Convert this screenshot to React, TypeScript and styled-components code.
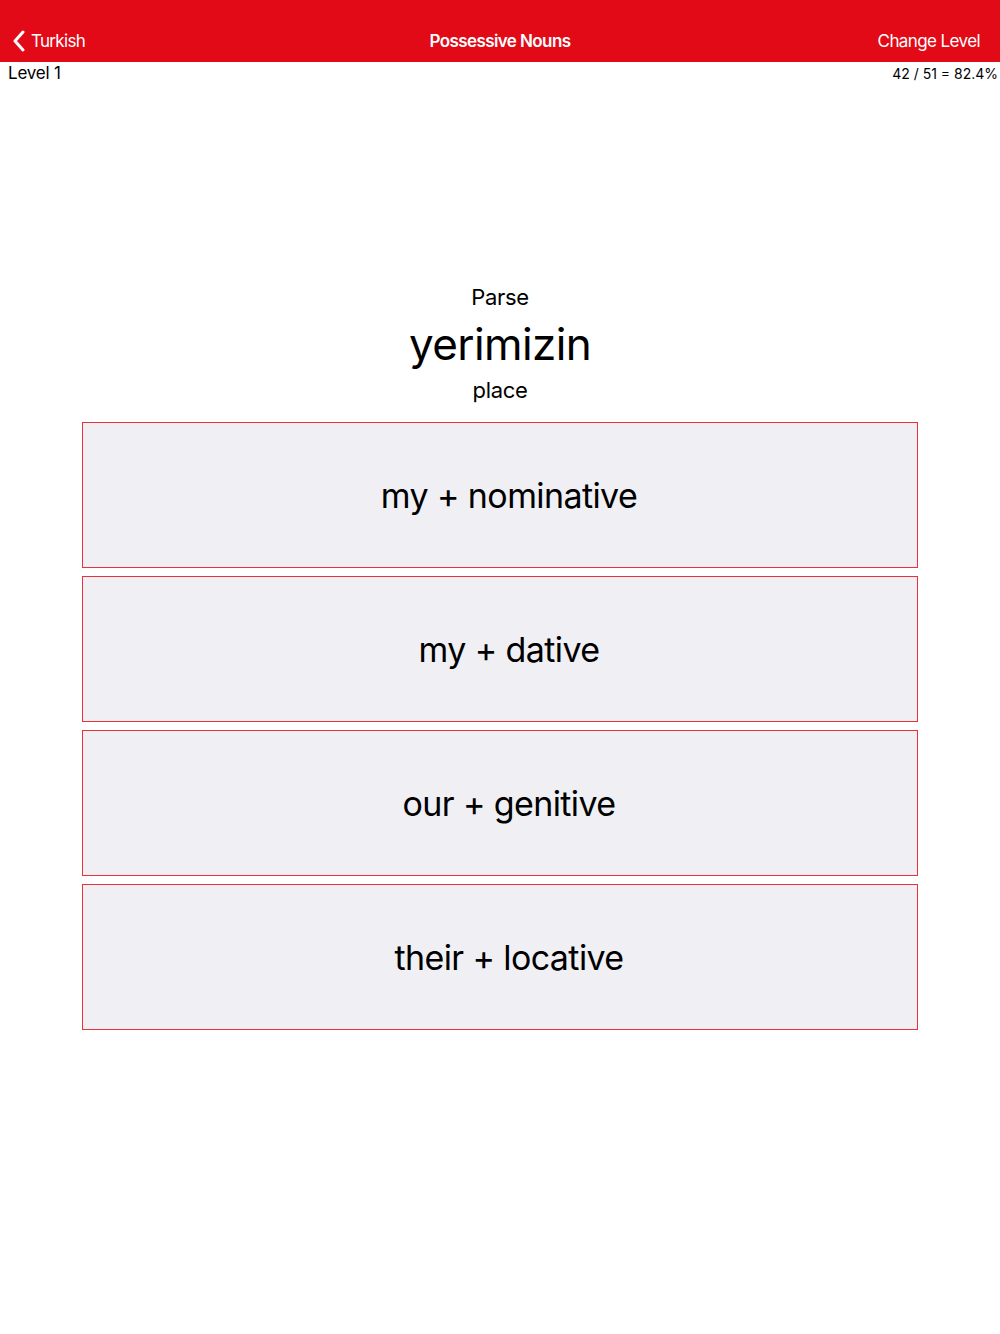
import styled, { createGlobalStyle } from 'styled-components';

const GlobalStyle = createGlobalStyle`
  html, body {
    margin: 0;
    padding: 0;
    background: #fff;
    font-family: Inter, "Noto Sans", "Liberation Sans", sans-serif;
    color: #000;
  }
`;

const Page = styled.div`
  width: 1000px;
  min-height: 1334px;
  display: flex;
  flex-direction: column;
`;

const NavBar = styled.div`
  height: 62px;
  background: #e20a17;
  display: grid;
  grid-template-columns: 1fr auto 1fr;
  align-items: center;
  padding: 20px 20px 0 20px;
  box-sizing: border-box;
  color: #fff;
`;

const BackButton = styled.div`
  display: flex;
  align-items: center;
  gap: 5px;
  margin-left: -8px;
  font-size: 17px;
  letter-spacing: -0.7px;
`;

const Title = styled.div`
  font-size: 17px;
  font-weight: 600;
  letter-spacing: -0.6px;
`;

const NavAction = styled.div`
  justify-self: end;
  font-size: 17px;
  letter-spacing: -0.6px;
`;

const InfoRow = styled.div`
  display: flex;
  justify-content: space-between;
  align-items: center;
  height: 22px;
  padding: 0 2px 0 8px;
`;

const LevelLabel = styled.div`
  font-size: 17px;
  letter-spacing: -0.2px;
`;

const Score = styled.div`
  font-size: 14px;
`;

const Content = styled.div`
  display: flex;
  flex-direction: column;
  align-items: center;
  padding-top: 198px;
`;

const Prompt = styled.div<{ height: number }>`
  height: ${({ height }) => height}px;
  display: flex;
  align-items: center;
  font-size: 22px;
  letter-spacing: -0.3px;
`;

const Word = styled.div`
  height: 64px;
  display: flex;
  align-items: center;
  font-size: 44px;
  letter-spacing: -0.6px;
`;

const Choices = styled.div`
  width: 836px;
  margin-top: 18px;
  display: flex;
  flex-direction: column;
  gap: 8px;
`;

const Choice = styled.div`
  height: 146px;
  box-sizing: border-box;
  border: 1.5px solid #e9303b;
  background: #efeff4;
  display: flex;
  align-items: center;
  justify-content: center;
  padding-left: 18px;
  font-size: 34px;
  letter-spacing: -0.6px;
`;

const options = ['my + nominative', 'my + dative', 'our + genitive', 'their + locative'];

const App = () => (
  <>
    <GlobalStyle />
    <Page>
      <NavBar>
        <BackButton>
          <svg width="14" height="22" viewBox="0 0 14 22">
            <path d="M11 2 L3 11 L11 20" fill="none" stroke="#fff" strokeWidth="3" strokeLinecap="round" strokeLinejoin="round" />
          </svg>
          Turkish
        </BackButton>
        <Title>Possessive Nouns</Title>
        <NavAction>Change Level</NavAction>
      </NavBar>
      <InfoRow>
        <LevelLabel>Level 1</LevelLabel>
        <Score>42 / 51 = 82.4%</Score>
      </InfoRow>
      <Content>
        <Prompt height={30}>Parse</Prompt>
        <Word>yerimizin</Word>
        <Prompt height={28}>place</Prompt>
        <Choices>
          {options.map(o => (
            <Choice key={o}>{o}</Choice>
          ))}
        </Choices>
      </Content>
    </Page>
  </>
);

export default App;
